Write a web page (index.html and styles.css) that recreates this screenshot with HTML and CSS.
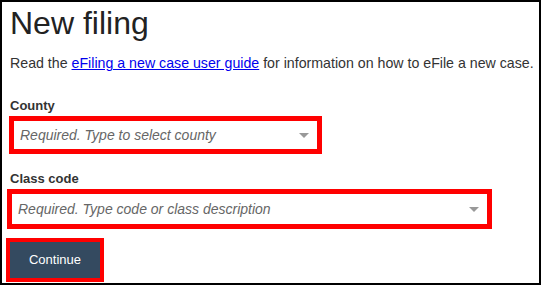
FILE: index.html
```html
<!DOCTYPE html>
<html>
<head>
<meta charset="utf-8">
<link rel="stylesheet" href="styles.css">
</head>
<body>
<div class="frame">
  <h1 class="title">New filing</h1>
  <p class="intro">Read the <a href="#" class="link">eFiling a new case user guide</a> for information on how to eFile a new case.</p>
  <label class="label label-county">County</label>
  <div class="mark mark-county">
    <div class="select">
      <span class="placeholder">Required. Type to select county</span>
      <span class="caret"></span>
    </div>
  </div>
  <label class="label label-class">Class code</label>
  <div class="mark mark-class">
    <div class="select">
      <span class="placeholder">Required. Type code or class description</span>
      <span class="caret"></span>
    </div>
  </div>
  <div class="mark mark-button">
    <button class="btn">Continue</button>
  </div>
</div>
</body>
</html>
```

FILE: styles.css
```css
html, body {
  margin: 0;
  padding: 0;
  background: #fff;
}
body {
  font-family: "Liberation Sans", Arial, sans-serif;
  color: #222;
}
.frame {
  box-sizing: border-box;
  width: 541px;
  height: 285px;
  border: 2px solid #000;
  padding: 0 0 0 3px;
  display: flex;
  flex-direction: column;
  align-items: flex-start;
}
.title {
  margin: 3px 0 0 5px;
  font-size: 32px;
  line-height: 36px;
  font-weight: normal;
  color: #222;
}
.intro {
  margin: 14px 0 0 5px;
  font-size: 14.2px;
  line-height: 16px;
  color: #333;
}
.link {
  color: #0000ee;
  text-decoration: underline;
}
.label {
  display: block;
  margin-left: 5px;
  font-size: 13px;
  line-height: 15px;
  font-weight: bold;
  color: #333;
}
.label-county {
  margin-top: 27px;
}
.label-class {
  margin-top: 17px;
}
.mark {
  border: 5px solid #ff0000;
  box-sizing: border-box;
}
.mark-county {
  margin: 3px 0 0 4px;
  width: 313px;
  height: 38px;
}
.mark-class {
  margin: 3px 0 0 2px;
  width: 485px;
  height: 40px;
}
.select {
  height: 100%;
  display: flex;
  align-items: center;
  justify-content: space-between;
  padding: 0 8px 0 6px;
  box-sizing: border-box;
}
.placeholder {
  font-size: 14px;
  font-style: italic;
  color: #666;
}
.caret {
  width: 0;
  height: 0;
  border-left: 5px solid transparent;
  border-right: 5px solid transparent;
  border-top: 5px solid #999;
}
.mark-button {
  margin: 9px 0 0 1px;
  border-width: 4px;
}
.btn {
  display: block;
  width: 90px;
  height: 36px;
  border: 0;
  margin: 0;
  background: #344a60;
  color: #fff;
  font-family: "Liberation Sans", Arial, sans-serif;
  font-size: 13px;
  padding: 0 0 2px;
}
```
